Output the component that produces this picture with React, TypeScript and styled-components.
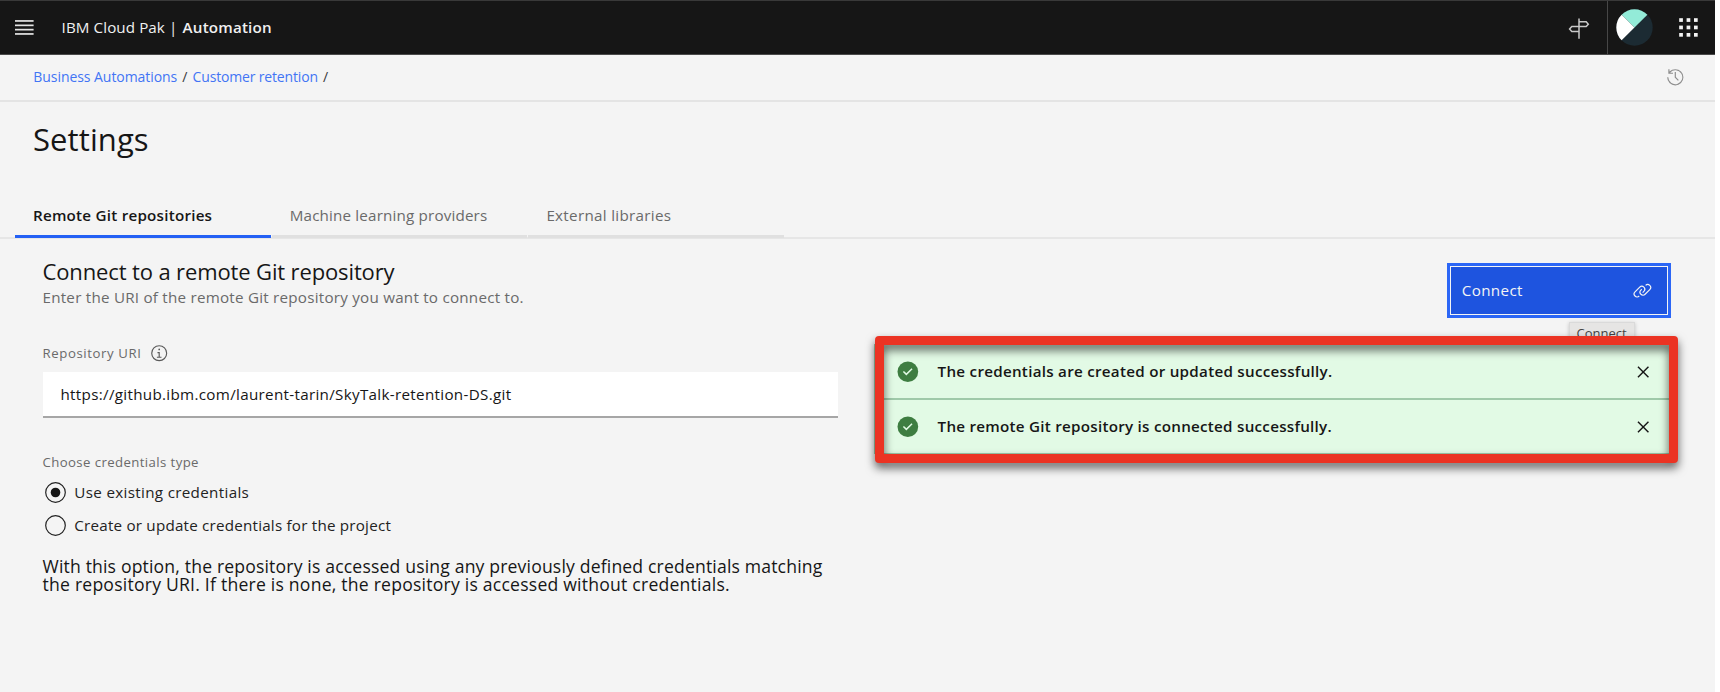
import React from "react";
import styled, { createGlobalStyle } from "styled-components";

const Global = createGlobalStyle`
  * { box-sizing: border-box; }
  html, body { margin: 0; background: #fff; }
  body { font-family: "Open Sans", "Noto Sans", sans-serif; color: #161616; }
  h1, h2, p { margin: 0; font-weight: 400; }
  svg { display: block; flex: none; }
  button { font: inherit; border: 0; background: none; padding: 0; margin: 0; color: inherit; }
`;

const Page = styled.div`
  width: 1715px;
  height: 692px;
  background: #f4f4f4;
  overflow: hidden;
`;

const Header = styled.header`
  display: flex;
  align-items: center;
  height: 55px;
  padding-left: 15px;
  background: #161616;
  border-top: 1px solid #393939;
  border-bottom: 1px solid #4a4a4a;
  color: #f0f0f0;
`;

const Product = styled.div`
  flex: 1;
  margin-left: 27.6px;
  padding-bottom: 2px;
  font-size: 15.2px;
  line-height: 22px;
  letter-spacing: 0.079px;
  white-space: pre;
`;

const ProductName = styled.b`
  margin-left: 1.2px;
  font-weight: 600;
  letter-spacing: 0.175px;
`;

const HeaderDivider = styled.span`
  width: 1px;
  height: 53px;
  margin: 0 8px 0 17px;
  background: #474747;
`;

const AppSwitcher = styled.button`
  margin: 0 17px 0 26px;
`;

const BreadcrumbBar = styled.nav`
  display: flex;
  align-items: center;
  justify-content: space-between;
  height: 47px;
  padding: 0 30.4px 0 33.3px;
  border-bottom: 2px solid #e4e4e4;
`;

const Breadcrumbs = styled.div`
  display: flex;
  padding-bottom: 2px;
  font-size: 14px;
  line-height: 20px;
  color: #393939;
`;

const Crumb = styled.a<{ $tracking: number }>`
  color: #4274f4;
  letter-spacing: ${(p) => p.$tracking}px;
`;

const Slash = styled.span`
  width: 15.3px;
  text-align: center;
`;

const Title = styled.h1`
  margin: 17px 0 37px 33px;
  font-size: 31px;
  line-height: 40px;
  font-weight: 400;
  letter-spacing: 0.1px;
`;

const Tabs = styled.div`
  display: flex;
  gap: 1.2px;
  height: 43px;
  padding-left: 15px;
  border-bottom: 2px solid #e6e6e6;
`;

const Tab = styled.button<{ $active?: boolean; $tracking: number }>`
  width: 255.5px;
  height: 42px;
  padding-left: 18px;
  border-bottom: 3px solid ${(p) => (p.$active ? "#2460f4" : "#e0e0e0")};
  color: ${(p) => (p.$active ? "#161616" : "#6a6a6a")};
  font-size: 15.2px;
  font-weight: ${(p) => (p.$active ? 600 : 400)};
  letter-spacing: ${(p) => p.$tracking}px;
  line-height: 39px;
  text-align: left;
`;

const Content = styled.main`
  display: grid;
  grid-template-columns: 795.5px 797px;
  column-gap: 36px;
  padding-left: 42.5px;
`;

const Form = styled.section`
  padding-top: 16.5px;
`;

const Heading = styled.h2`
  font-size: 22px;
  line-height: 30px;
  letter-spacing: -0.13px;
`;

const Hint = styled.p`
  color: #6a6a6a;
  font-size: 15.2px;
  line-height: 22px;
  letter-spacing: 0.234px;
`;

const Label = styled.div<{ $gap: number; $tracking: number }>`
  display: flex;
  align-items: center;
  gap: 8.3px;
  height: 18px;
  margin-top: ${(p) => p.$gap}px;
  color: #6a6a6a;
  font-size: 13.2px;
  line-height: 18px;
  letter-spacing: ${(p) => p.$tracking}px;
`;

const Field = styled.div`
  height: 46px;
  margin-top: 10px;
  padding-left: 18px;
  background: #fff;
  border-bottom: 2px solid #a6a6a6;
  font-size: 15.2px;
  line-height: 44px;
  letter-spacing: 0.31px;
`;

const RadioGroup = styled.div`
  display: grid;
  row-gap: 11px;
  margin-top: 10.5px;
  padding-left: 2px;
`;

const Radio = styled.div`
  display: flex;
  align-items: center;
  gap: 8.8px;
  height: 22px;
`;

const RadioText = styled.span<{ $tracking: number }>`
  padding-bottom: 2px;
  font-size: 15.2px;
  line-height: 22px;
  letter-spacing: ${(p) => p.$tracking}px;
  color: #222;
`;

const Explanation = styled.p`
  margin-top: 20.2px;
  font-size: 17.6px;
  line-height: 18.6px;
  white-space: nowrap;
`;

const Line = styled.span<{ $tracking: number }>`
  display: block;
  letter-spacing: ${(p) => p.$tracking}px;
`;

const Side = styled.section`
  display: flex;
  flex-direction: column;
  padding-top: 24px;
`;

const ButtonAnchor = styled.div`
  position: relative;
  align-self: flex-end;
  width: 224px;
`;

const ConnectButton = styled.button`
  display: flex;
  align-items: center;
  justify-content: space-between;
  width: 224px;
  height: 55px;
  padding: 0 16px 0 11.8px;
  background: #1e54df;
  border: 3px solid #2b66f6;
  box-shadow: inset 0 0 0 1px #f4f4f4;
  color: #f4f4f4;
  font-size: 15.2px;
  letter-spacing: 0.35px;
`;

const ConnectLabel = styled.span`
  padding-bottom: 1px;
`;

const Tooltip = styled.div`
  position: absolute;
  top: 59px;
  left: 121.5px;
  width: 66px;
  height: 22px;
  background: #e6e5e4;
  border: 1px solid #dadada;
  box-shadow: 0 1px 4px rgba(0, 0, 0, 0.2);
  color: #444;
  font-size: 13px;
  line-height: 20px;
  text-align: center;
`;

const Notifications = styled.div`
  position: relative;
  margin-top: 26px;
`;

const Notification = styled.div`
  display: flex;
  align-items: center;
  height: 55px;
  padding: 0 15.5px 0 21.3px;
  background: #e2fae5;
  border: 1px solid #9fc9a9;
`;

const Message = styled.b<{ $tracking: number }>`
  flex: 1;
  margin-left: 18.3px;
  padding-bottom: 2px;
  font-size: 15.2px;
  font-weight: 600;
  letter-spacing: ${(p) => p.$tracking}px;
`;

const Highlight = styled.div`
  position: absolute;
  top: -8px;
  left: 1px;
  width: 803px;
  height: 127px;
  border: 9px solid #eb3323;
  border-radius: 4px;
  filter: drop-shadow(0 5px 5px rgba(0, 0, 0, 0.62));
`;

const MenuIcon = () => (
  <svg width="19" height="16" viewBox="0 0 19 16" fill="#e4e4e4">
    {[0.1, 4.5, 8.8, 13.1].map((y) => (
      <rect key={y} x="0" y={y} width="18.6" height="1.7" />
    ))}
  </svg>
);

const SignpostIcon = () => (
  <svg width="22" height="22" viewBox="0 0 22 22" fill="none" stroke="#c8c8c8" strokeWidth="1.5">
    <path d="M11 1.4V21.8M11 4.8H18.2L20.3 7.2L18.2 9.6H3.8L1.6 12.1L3.8 14.5H11" />
  </svg>
);

const Avatar = () => (
  <svg width="37" height="37" viewBox="-18.5 -18.5 37 37">
    <circle r="18.2" fill="#1c2b33" />
    <path d="M-12.87 -12.87A18.2 18.2 0 0 1 12.87 -12.87L0 0Z" fill="#93ebd8" />
    <path d="M12.87 -12.87L0 0L-12.87 12.87A18.2 18.2 0 0 1 -12.87 -12.87L0 0Z" fill="#fff" />
  </svg>
);

const SwitcherIcon = () => (
  <svg width="19" height="19" viewBox="0 0 19 19" fill="#f4f4f4">
    {[0.2, 7.6, 15].map((y) =>
      [0.2, 7.6, 15].map((x) => <rect key={`${x}-${y}`} x={x} y={y} width="3.7" height="3.7" />)
    )}
  </svg>
);

const HistoryIcon = () => (
  <svg width="18.6" height="18.6" viewBox="0 0 32 32" fill="#8d8d8d">
    <path d="M20.59 22 15 16.41 15 7 17 7 17 15.58 22 20.59 20.59 22z" />
    <path d="M16,2A13.94,13.94,0,0,0,6,6.23V2H4v8h8V8H7.08A12,12,0,1,1,4,16H2A14,14,0,1,0,16,2Z" />
  </svg>
);

const InfoIcon = () => (
  <svg width="18.4" height="18.4" viewBox="0 0 32 32" fill="#5a5a5a">
    <path d="M17 22 17 14 13 14 13 16 15 16 15 22 12 22 12 24 20 24 20 22 17 22z" />
    <path d="M16,8a1.5,1.5,0,1,0,1.5,1.5A1.5,1.5,0,0,0,16,8Z" />
    <path d="M16,30A14,14,0,1,1,30,16,14,14,0,0,1,16,30ZM16,4A12,12,0,1,0,28,16,12,12,0,0,0,16,4Z" />
  </svg>
);

const LinkIcon = () => (
  <svg width="18.8" height="18.8" viewBox="0 0 32 32" fill="#f4f4f4">
    <path d="M29.25,6.76a6,6,0,0,0-8.5,0l1.42,1.42a4,4,0,1,1,5.67,5.67l-8,8a4,4,0,1,1-5.67-5.66l1.41-1.42-1.41-1.42-1.42,1.42a6,6,0,0,0,0,8.5A6,6,0,0,0,17,25a6,6,0,0,0,4.27-1.76l8-8A6,6,0,0,0,29.25,6.76Z" />
    <path d="M4.19,24.82a4,4,0,0,1,0-5.67l8-8a4,4,0,0,1,5.67,0A3.94,3.94,0,0,1,19,14a4,4,0,0,1-1.17,2.85L15.71,19l1.42,1.42,2.12-2.12a6,6,0,0,0-8.51-8.51l-8,8a6,6,0,0,0,0,8.51A6,6,0,0,0,7,28a6.07,6.07,0,0,0,4.28-1.76L9.86,24.82A4,4,0,0,1,4.19,24.82Z" />
  </svg>
);

const SuccessIcon = () => (
  <svg width="23" height="23" viewBox="0 0 20 20">
    <circle cx="10.3" cy="10.2" r="9" fill="#3e7d41" />
    <path d="M9 13.4l-3-3 .9-.9 2.1 2.1 4.5-4.5.9.9z" fill="#e2fae5" />
  </svg>
);

const CloseIcon = () => (
  <svg width="23" height="23" viewBox="0 0 32 32" fill="#161616">
    <path transform="translate(-0.4 0.6)" d="M24 9.4 22.6 8 16 14.6 9.4 8 8 9.4 14.6 16 8 22.6 9.4 24 16 17.4 22.6 24 24 22.6 17.4 16 24 9.4z" />
  </svg>
);

const RadioMark = ({ checked }: { checked?: boolean }) => (
  <svg width="21" height="21" viewBox="0 0 21 21">
    <circle cx="10.5" cy="10.5" r="9.8" fill="none" stroke="#222" strokeWidth="1.2" />
    {checked && <circle cx="10.5" cy="10.5" r="4.8" fill="#161616" />}
  </svg>
);

export default function App() {
  return (
    <Page>
      <Global />
      <Header>
        <MenuIcon />
        <Product>
          IBM Cloud Pak | <ProductName>Automation</ProductName>
        </Product>
        <SignpostIcon />
        <HeaderDivider />
        <Avatar />
        <AppSwitcher aria-label="App switcher">
          <SwitcherIcon />
        </AppSwitcher>
      </Header>
      <BreadcrumbBar>
        <Breadcrumbs>
          <Crumb $tracking={-0.056}>Business Automations</Crumb>
          <Slash>/</Slash>
          <Crumb $tracking={-0.16}>Customer retention</Crumb>
          <Slash>/</Slash>
        </Breadcrumbs>
        <HistoryIcon />
      </BreadcrumbBar>
      <Title>Settings</Title>
      <Tabs>
        <Tab $active $tracking={0.228}>Remote Git repositories</Tab>
        <Tab $tracking={0.17}>Machine learning providers</Tab>
        <Tab $tracking={0.3}>External libraries</Tab>
      </Tabs>
      <Content>
        <Form>
          <Heading>Connect to a remote Git repository</Heading>
          <Hint>Enter the URI of the remote Git repository you want to connect to.</Hint>
          <Label $gap={36.5} $tracking={0.6}>
            Repository URI <InfoIcon />
          </Label>
          <Field>https://github.ibm.com/laurent-tarin/SkyTalk-retention-DS.git</Field>
          <Label $gap={35} $tracking={0.4}>Choose credentials type</Label>
          <RadioGroup>
            <Radio>
              <RadioMark checked />
              <RadioText $tracking={0.327}>Use existing credentials</RadioText>
            </Radio>
            <Radio>
              <RadioMark />
              <RadioText $tracking={0.215}>Create or update credentials for the project</RadioText>
            </Radio>
          </RadioGroup>
          <Explanation>
            <Line $tracking={0.162}>
              With this option, the repository is accessed using any previously defined credentials matching
            </Line>
            <Line $tracking={0.218}>
              the repository URI. If there is none, the repository is accessed without credentials.
            </Line>
          </Explanation>
        </Form>
        <Side>
          <ButtonAnchor>
            <ConnectButton>
              <ConnectLabel>Connect</ConnectLabel> <LinkIcon />
            </ConnectButton>
            <Tooltip>Connect</Tooltip>
          </ButtonAnchor>
          <Notifications>
            <Notification>
              <SuccessIcon />
              <Message $tracking={0.265}>The credentials are created or updated successfully.</Message>
              <CloseIcon />
            </Notification>
            <Notification>
              <SuccessIcon />
              <Message $tracking={0.252}>The remote Git repository is connected successfully.</Message>
              <CloseIcon />
            </Notification>
            <Highlight />
          </Notifications>
        </Side>
      </Content>
    </Page>
  );
}
